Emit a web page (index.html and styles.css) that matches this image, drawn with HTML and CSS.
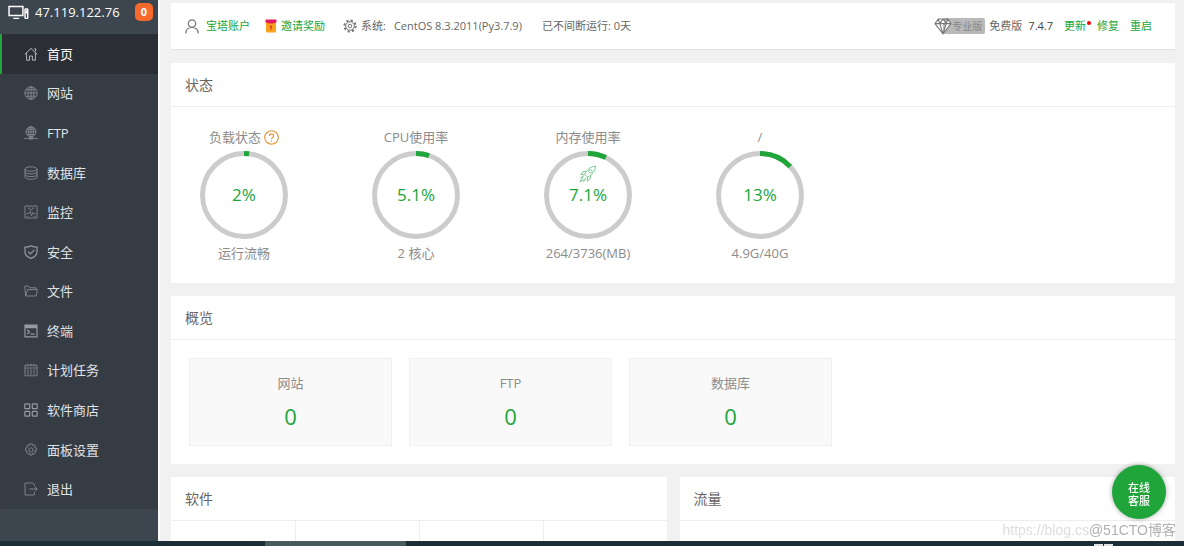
FILE: index.html
```html
<!DOCTYPE html>
<html lang="zh-CN">
<head>
<meta charset="utf-8">
<title>宝塔面板</title>
<link rel="stylesheet" href="styles.css">
</head>
<body>
<div class="app">
  <aside class="sidebar">
    <div class="server">
      <svg class="server-icon" viewBox="0 0 20 14" fill="none" stroke="currentColor" stroke-width="1.4"><path d="M1 1.2h13.2v8.6H1zM5 12.6h5.6"/><rect x="16.2" y="3.6" width="2.6" height="9" rx=".5"/><path d="M17.5 5v3"/></svg>
      <span class="server-ip">47.119.122.76</span>
      <span class="server-count">0</span>
    </div>
    <nav class="menu">
      <a class="menu-item active" href="#"><svg class="menu-icon" viewBox="0 0 14 14"><path d="M.8 7.4 7 1.4l6.2 6M2.6 6v7.2h3V9h2.8v4.2h3V6M10.2 1.8h1.5v2.8"/></svg>首页</a>
      <a class="menu-item" href="#"><svg class="menu-icon" viewBox="0 0 14 14"><circle cx="7" cy="7" r="6.2"/><ellipse cx="7" cy="7" rx="3" ry="6.2"/><path d="M7 .8v12.4M.8 7h12.4M1.8 3.8h10.4M1.8 10.2h10.4"/></svg>网站</a>
      <a class="menu-item" href="#"><svg class="menu-icon" viewBox="0 0 14 14"><circle cx="7" cy="5.8" r="5"/><ellipse cx="7" cy="5.8" rx="2.4" ry="5"/><path d="M7 .8v10M2 5.8h10M2.8 3.2h8.4M2.8 8.4h8.4M0 12.4h14M5.5 11.4h3v1.8h-3z"/></svg>FTP</a>
      <a class="menu-item" href="#"><svg class="menu-icon" viewBox="0 0 14 14"><ellipse cx="7" cy="3" rx="6" ry="2.2"/><path d="M1 3v8c0 3 12 3 12 0V3M1 5.7c0 2.9 12 2.9 12 0M1 8.4c0 2.9 12 2.9 12 0"/></svg>数据库</a>
      <a class="menu-item" href="#"><svg class="menu-icon" viewBox="0 0 14 14"><path d="M1 1h12v12H1zM2.6 8.5h2l1.4-2 1.5 4 1.4-3 .8 1h1.8M4 3.2h2.4M8 3.2h2M5.4 4.8h3M3 11.4h1.4M9.6 11.4H11"/></svg>监控</a>
      <a class="menu-item" href="#"><svg class="menu-icon bold" viewBox="0 0 14 14"><path d="M7 .7c2 1.2 4 1.5 6 1.5V7c0 3-2.6 5.2-6 6.4C3.6 12.2 1 10 1 7V2.2C3 2.2 5 1.9 7 .7zM4 6.6 6.4 9l4-4.2"/></svg>安全</a>
      <a class="menu-item" href="#"><svg class="menu-icon" viewBox="0 0 14 14"><path d="M1.6 12 .8 2.2h4L6 3.800h6v1.800M1.600 12h10.600l1.200-6.400H3.600L1.600 12"/></svg>文件</a>
      <a class="menu-item" href="#"><svg class="menu-icon bold" viewBox="0 0 14 14"><path d="M1 1.200h12v11.600H1zM1 2.400h12M1 3.600h12M3.200 5.800l2.300 2.100-2.300 2.100M6.600 10.200h4"/></svg>终端</a>
      <a class="menu-item" href="#"><svg class="menu-icon" viewBox="0 0 14 14"><path d="M1 2.200h12v10.600H1zM1 5h12M4 .8v2.600M10 .8v2.600M7 .8v2.600M4 6.200v5.600M7 6.200v5.600M10 6.200v5.600"/></svg>计划任务</a>
      <a class="menu-item" href="#"><svg class="menu-icon bold" viewBox="0 0 14 14"><rect x=".8" y=".8" width="4.900" height="4.900" rx=".8"/><rect x="8.300" y=".8" width="4.900" height="4.900" rx=".8"/><rect x=".8" y="8.300" width="4.900" height="4.900" rx=".8"/><rect x="8.300" y="8.300" width="4.900" height="4.900" rx=".8"/></svg>软件商店</a>
      <a class="menu-item" href="#"><svg class="menu-icon" viewBox="0 0 14 14"><circle cx="7" cy="7" r="2.200"/><path d="M5.900.8h2.200l.4 1.700 1.500-.9 1.500 1.500-.9 1.500 1.800.5v2.600l-1.800.4.9 1.600-1.500 1.500-1.500-.9-.4 1.700H5.900l-.4-1.700-1.500.9-1.500-1.500.9-1.600-1.800-.4V5.100l1.800-.5-.9-1.500L4 1.600l1.500.9z"/></svg>面板设置</a>
      <a class="menu-item" href="#"><svg class="menu-icon" viewBox="0 0 14 14"><path d="M10.400 4.400V2.600l-1.600-1.600H1v12h9.400V9.800M5.400 7h7.800M11.200 5l2 2-2 2"/></svg>退出</a>
    </nav>
  </aside>

  <main class="main">
    <header class="panel topbar">
      <a class="top-link account" href="#"><svg class="user-icon" viewBox="0 0 14 15" fill="none" stroke="#777" stroke-width="1.200"><circle cx="7" cy="4.500" r="3.700"/><path d="M.8 14.500c0-4 2.400-6 6.200-6s6.200 2 6.200 6"/></svg>宝塔账户</a>
      <a class="top-link invite" href="#"><svg class="gift-icon" viewBox="0 0 12 14"><rect x="1" y="1" width="10" height="12.600" rx="1.500" fill="#f9a11b"/><path d="M.5 1.500Q.5.500 1.500.500h9q1 0 1 1v1.700Q6 6 .5 3.200z" fill="#e3175f"/><path d="M6 6l1.700 1.700L6.600 8.700V11H5.400V8.700L4.300 7.700z" fill="#e0432c"/></svg>邀请奖励</a>
      <span class="system"><svg class="gear-icon" viewBox="0 0 14 14" fill="none" stroke="#777"><circle cx="7" cy="7" r="5.600" stroke-width="2" stroke-dasharray="2.200 2.200"/><circle cx="7" cy="7" r="4.300"/><circle cx="7" cy="7" r="1.800"/></svg>系统: <span class="os-name">CentOS 8.3.2011(Py3.7.9)</span></span>
      <span class="uptime">已不间断运行: 0天</span>
      <div class="version">
        <svg class="diamond-icon" viewBox="0 0 18 17" fill="#fff" stroke="#777" stroke-width="1.100"><path d="M4.200 1h9.600L17 5.600 9 16 1 5.600zM1 5.600h16M4.200 1l1.600 4.600L9 16l3.200-10.400L13.800 1M5.800 5.600 9 1l3.200 4.600" stroke-linejoin="round"/></svg>
        <span class="pro">专业版</span>
        <span class="edition">免费版</span>
        <span class="number">7.4.7</span>
        <a class="top-link update" href="#">更新</a>
        <a class="top-link repair" href="#">修复</a>
        <a class="top-link" href="#">重启</a>
      </div>
    </header>

    <section class="panel">
      <h2 class="panel-title">状态</h2>
      <div class="gauges">
        <div class="gauge">
          <div class="gauge-label">负载状态 <svg class="help-icon" viewBox="0 0 14 14" fill="none" stroke="#e8963c" stroke-width="1.100"><circle cx="7" cy="7" r="6.300"/><path d="M5 5.600c0-2.600 4-2.600 4 0 0 1.300-2 1.500-2 3M7 9.700v1.200"/></svg></div>
          <div class="dial"><svg class="ring" viewBox="0 0 88 88"><circle class="track" cx="44" cy="44" r="41.500"/><circle class="value" cx="44" cy="44" r="41.500" pathLength="100" stroke-dasharray="2 100"/></svg><span class="percent">2%</span></div>
          <div class="gauge-note">运行流畅</div>
        </div>
        <div class="gauge">
          <div class="gauge-label">CPU使用率</div>
          <div class="dial"><svg class="ring" viewBox="0 0 88 88"><circle class="track" cx="44" cy="44" r="41.500"/><circle class="value" cx="44" cy="44" r="41.500" pathLength="100" stroke-dasharray="5.100 100"/></svg><span class="percent">5.1%</span></div>
          <div class="gauge-note">2 核心</div>
        </div>
        <div class="gauge">
          <div class="gauge-label">内存使用率</div>
          <div class="dial"><svg class="ring" viewBox="0 0 88 88"><circle class="track" cx="44" cy="44" r="41.500"/><circle class="value" cx="44" cy="44" r="41.500" pathLength="100" stroke-dasharray="7.100 100"/></svg>
            <svg class="rocket" viewBox="0 0 18 18" fill="none" stroke="#5bbd74" stroke-width=".8"><path d="M16.500 1.200C11.500 1.500 8 4.500 5.500 9.200l3 3c4.700-2.500 7.700-6 8-11zM7.500 6.200 4 6.700 1.800 9.500l3.700-.3M11.500 10.200l-.4 3.600-2.900 2.300.3-3.900M4.800 10.400 1 16.800l6.200-3.600M3.200 11.200 1.200 13.500M6.200 14.800l-2 2.200"/><circle cx="11.500" cy="6.300" r="1.700"/></svg>
            <span class="percent">7.1%</span></div>
          <div class="gauge-note">264/3736(MB)</div>
        </div>
        <div class="gauge">
          <div class="gauge-label">/</div>
          <div class="dial"><svg class="ring" viewBox="0 0 88 88"><circle class="track" cx="44" cy="44" r="41.500"/><circle class="value" cx="44" cy="44" r="41.500" pathLength="100" stroke-dasharray="13 100"/></svg><span class="percent">13%</span></div>
          <div class="gauge-note">4.9G/40G</div>
        </div>
      </div>
    </section>

    <section class="panel">
      <h2 class="panel-title">概览</h2>
      <div class="stats">
        <div class="stat"><span>网站</span><a class="stat-value" href="#">0</a></div>
        <div class="stat"><span>FTP</span><a class="stat-value" href="#">0</a></div>
        <div class="stat"><span>数据库</span><a class="stat-value" href="#">0</a></div>
      </div>
    </section>

    <div class="columns">
      <section class="panel">
        <h2 class="panel-title">软件</h2>
        <div class="software"><div></div><div></div><div></div><div></div></div>
      </section>
      <section class="panel">
        <h2 class="panel-title">流量</h2>
      </section>
    </div>
  </main>
</div>
<footer class="taskbar"><div class="task"></div><div class="tray"></div></footer>
<button class="support" type="button">在线<br>客服</button>
<div class="watermark"><span class="mark-url">https://blog.cs</span><span class="mark-name">@51CTO博客</span></div>
</body>
</html>
```
FILE: styles.css
```css
* { box-sizing: border-box; }

body {
  margin: 0;
  height: 100vh;
  display: flex;
  flex-direction: column;
  overflow: hidden;
  background: #f1f1f1;
  color: #666;
  font: 13px/20px "Open Sans", "Noto Sans CJK SC", sans-serif;
}

a { color: inherit; text-decoration: none; }
svg { flex: none; display: block; }

.app {
  flex: 1;
  min-height: 0;
  display: flex;
}

/* Sidebar */
.sidebar {
  flex: none;
  width: 158px;
  display: flex;
  flex-direction: column;
  padding-bottom: 32px;
  background: #3d454e;
  color: #fff;
}

.server {
  height: 34px;
  display: flex;
  align-items: center;
  padding: 0 5px 10px 8px;
}
.server-icon { width: 21px; height: 15px; margin-right: 6px; }
.server-count {
  width: 18px;
  height: 18px;
  margin-left: auto;
  border-radius: 5px;
  background: #f8692b;
  font-size: 11px;
  font-weight: 700;
  line-height: 18px;
  text-align: center;
}

.menu {
  flex: 1;
  display: grid;
  grid-auto-rows: 1fr;
  background: #353c44;
}
.menu-item {
  display: flex;
  align-items: center;
  gap: 9px;
  padding-left: 22px;
  border-left: 2px solid #3a3d42;
  color: #e0e3e6;
}
.menu-item.active {
  border-left-color: #20a53a;
  background: #2b2e34;
  color: #fff;
}
.menu-icon {
  width: 14px;
  height: 14px;
  fill: none;
  stroke: #848b91;
  stroke-width: .9;
}
.menu-icon.bold { stroke: #959ba0; stroke-width: 1.2; }
.active .menu-icon { stroke: #c4c7ca; }

/* Content */
.main {
  flex: 1;
  min-width: 0;
  display: flex;
  flex-direction: column;
  gap: 13px;
  overflow: hidden;
  padding: 3px 9px 0 11px;
  border-left: 2px solid #fafafa;
}
.main > * { flex: none; }
.panel { background: #fff; }

.topbar {
  height: 47px;
  display: flex;
  align-items: center;
  padding: 0 23px 0 14px;
  border-bottom: 1px solid #e2e2e2;
  font-size: 11px;
  white-space: nowrap;
}
.top-link { color: #20a53a; }
.account, .invite, .system { display: flex; align-items: center; }
.account { gap: 7px; margin-right: 15px; }
.invite { gap: 4px; margin-right: 18px; }
.system { gap: 4px; margin-right: 20px; }
.user-icon { width: 14px; height: 15px; }
.gift-icon { width: 12px; height: 14px; }
.gear-icon { width: 14px; height: 14px; }
.os-name { margin-left: 4px; }

.version {
  display: flex;
  align-items: center;
  margin-left: auto;
}
.diamond-icon {
  z-index: 1;
  width: 18px;
  height: 17px;
  margin-right: -9px;
}
.pro {
  height: 16px;
  margin-right: 4px;
  padding: 0 3px 0 9px;
  border-radius: 2px;
  background: #b9b9b9;
  color: #888;
  font-size: 10px;
  line-height: 16px;
}
.edition { margin-right: 6px; }
.number { margin-right: 11px; color: #444; }
.update { position: relative; margin-right: 11px; }
.update::after {
  content: "";
  position: absolute;
  top: 5px;
  right: -5px;
  width: 4px;
  height: 4px;
  border-radius: 50%;
  background: #f00;
}
.repair { margin-right: 11px; }

.panel-title {
  margin: 0;
  height: 44px;
  padding-left: 14px;
  border-bottom: 1px solid #eee;
  font-size: 14px;
  font-weight: 400;
  line-height: 44px;
}

.gauges {
  display: flex;
  gap: 70px;
  padding: 20px 22px;
}
.gauge {
  width: 102px;
  color: #8c8c8c;
  text-align: center;
  white-space: nowrap;
}
.gauge-label {
  display: flex;
  align-items: center;
  justify-content: center;
  gap: 3px;
  height: 20px;
}
.help-icon { width: 15px; height: 15px; }
.dial {
  display: grid;
  place-items: center;
  width: 88px;
  height: 88px;
  margin: 4px auto;
}
.dial > * { grid-area: 1 / 1; }
.ring { width: 88px; height: 88px; }
.ring circle { fill: none; stroke-width: 5; }
.track { stroke: #ccc; }
.value {
  stroke: #20a53a;
  transform: rotate(-90deg);
  transform-origin: center;
}
.percent { color: #20a53a; font-size: 17px; }
.rocket {
  width: 18px;
  height: 18px;
  align-self: start;
  margin-top: 14px;
}

.stats {
  display: flex;
  gap: 17px;
  padding: 18px;
}
.stat {
  flex: 0 1 203px;
  height: 88px;
  display: flex;
  flex-direction: column;
  align-items: center;
  gap: 8px;
  padding-top: 14px;
  border: 1px solid #f0f0f0;
  background: #f9f9f9;
  color: #8c8c8c;
}
.stat-value { color: #20a53a; font-size: 22px; line-height: 30px; }

.columns {
  display: grid;
  grid-template-columns: 1fr 1fr;
  gap: 13px;
}
.software {
  display: grid;
  grid-template-columns: repeat(4, 1fr);
  height: 80px;
}
.software div + div { border-left: 1px solid #eee; }

.taskbar {
  flex: none;
  display: flex;
  justify-content: space-between;
  height: 5px;
  padding: 0 71px 0 265px;
  background: #1b2d35;
}
.task { width: 141px; background: #485a5b; }
.tray {
  width: 19px;
  height: 2px;
  align-self: flex-end;
  background: linear-gradient(90deg, #dfe4e6 45%, transparent 45% 55%, #dfe4e6 55%);
}

.support {
  position: fixed;
  right: 18px;
  bottom: 27px;
  width: 54px;
  height: 54px;
  padding: 3px 0 0;
  border: 0;
  border-radius: 50%;
  background: #20a53a;
  box-shadow: 0 0 5px rgba(0, 0, 0, .35);
  color: #fff;
  font: 500 11px/13px "Open Sans", "Noto Sans CJK SC", sans-serif;
}

.watermark {
  position: fixed;
  right: 8px;
  bottom: 6px;
  display: flex;
  font-family: "Liberation Sans", "Noto Sans CJK SC", sans-serif;
  font-size: 14px;
  pointer-events: none;
}
.mark-url { color: #dedede; }
.mark-name { color: #b0b0b0; }
```
